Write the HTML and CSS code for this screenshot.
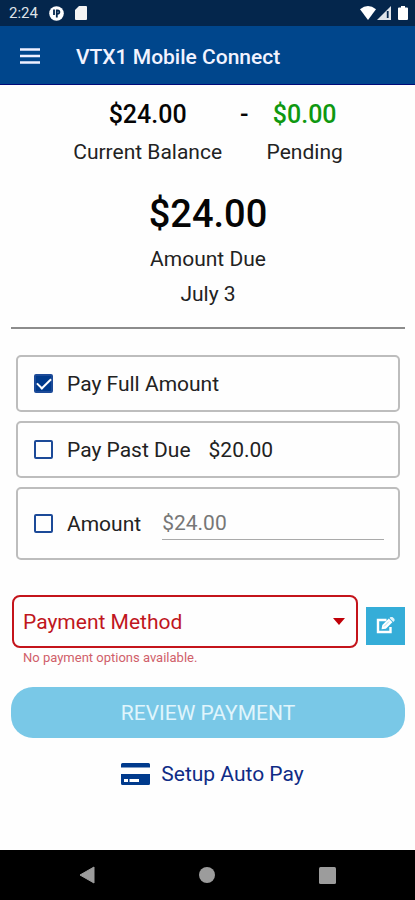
FILE: index.html
```html
<!DOCTYPE html>
<html lang="en">
<head>
<meta charset="utf-8">
<meta name="viewport" content="width=device-width, initial-scale=1">
<title>VTX1 Mobile Connect</title>
<link rel="stylesheet" href="styles.css">
</head>
<body>
<div class="status">
  <span class="status-time">2:24</span>
  <svg class="status-app" width="15" height="15" viewBox="0 0 15 15" aria-hidden="true"><circle cx="7.5" cy="7.5" r="7.3" fill="#fff"/><path d="M5 3.500v5.500M7.800 11.500V4.300h.8a1.800 1.800 0 0 1 0 3.600h-.8" fill="none" stroke="#04264c" stroke-width="1.800"/></svg>
  <svg width="12" height="14" viewBox="0 0 12 14" aria-hidden="true"><path d="M4 0h7q1 0 1 1v12q0 1-1 1H1q-1 0-1-1V4z" fill="#f4f4f4"/></svg>
  <div class="status-right">
    <svg width="16" height="14" viewBox="0 0 16 14" aria-hidden="true"><path d="M0 3.2Q8-3 16 3.2L8 14z" fill="#fff"/></svg>
    <svg width="14" height="14" viewBox="0 0 14 14" aria-hidden="true"><path d="M0 14L14 0v14z" fill="#dfe4ea"/><path d="M10.7 5v7" stroke="#04264c" stroke-width="1.8"/></svg>
    <svg class="battery" width="10" height="14" viewBox="0 0 10 14" aria-hidden="true"><path d="M3 0h4v1.5h2q1 0 1 1V13q0 1-1 1H1q-1 0-1-1V2.500q0-1 1-1h2z" fill="#fff"/></svg>
  </div>
</div>
<header class="bar">
  <button class="menu" type="button" aria-label="Menu"><svg width="22" height="16" viewBox="0 0 22 16"><path d="M1 1.500h20M1 8h20M1 14.500h20" stroke="#eef0ff" stroke-width="2.300"/></svg></button>
  <h1>VTX1 Mobile Connect</h1>
</header>
<main>
  <section class="balances">
    <div class="balance"><strong>$24.00</strong><span>Current Balance</span></div>
    <strong class="dash">-</strong>
    <div class="balance pending"><strong>$0.00</strong><span>Pending</span></div>
  </section>
  <section class="due">
    <strong>$24.00</strong>
    <span>Amount Due</span>
    <span>July 3</span>
  </section>
  <form class="form">
    <div class="options">
      <label class="option"><input class="check" type="checkbox" checked><span>Pay Full Amount</span></label>
      <label class="option"><input class="check" type="checkbox"><span>Pay Past Due</span><span>$20.00</span></label>
      <div class="option tall"><input class="check" type="checkbox" id="other"><label for="other">Amount</label><input class="amount" type="text" placeholder="$24.00" aria-label="Other amount"></div>
    </div>
    <div class="method">
      <div class="field">
        <select class="select" aria-label="Payment method"><option>Payment Method</option></select>
        <svg class="caret" width="12" height="7" viewBox="0 0 12 7" aria-hidden="true"><path d="M0 0h12L6 7z" fill="#c00008"/></svg>
      </div>
      <button class="edit" type="button" aria-label="Edit payment methods"><svg width="19" height="17" viewBox="0 0 19 17"><path d="M10.500 3H2v12h12.500v-5" fill="none" stroke="#fff" stroke-width="2.400"/><path d="M5.500 12.300l.8-4.200 6.500-6.500 3.600 3.600-6.500 6.500z" fill="#fff"/><path d="M13.500 1l1-1h2L18.500 2v1.800l-1.200 1.200z" fill="#dff3fa"/><path d="M8 9.500l5-5" stroke="#8fd0e8" stroke-width=".8"/></svg></button>
    </div>
    <p class="error">No payment options available.</p>
    <button class="review" type="button">REVIEW PAYMENT</button>
    <a class="auto" href="#"><svg width="29" height="22" viewBox="0 0 29 22" aria-hidden="true"><path d="M1.500 0h26Q29 0 29 1.500V4.500H0v-3Q0 0 1.500 0zM0 11h29v9.500q0 1.500-1.500 1.500h-26Q0 22 0 20.500z" fill="#003a8c"/><path d="M3 16h4v3H3zM8.500 16H18v3H8.500z" fill="#fff"/></svg><span>Setup Auto Pay</span></a>
  </form>
</main>
<nav class="nav">
  <button type="button" aria-label="Back"><svg width="16" height="18" viewBox="0 0 16 18"><path d="M15 1v16L1 9z" fill="#9c9c9c" stroke="#9c9c9c" stroke-linejoin="round"/></svg></button>
  <button type="button" aria-label="Home"><svg width="16" height="16" viewBox="0 0 16 16"><circle cx="8" cy="8" r="8" fill="#9c9c9c"/></svg></button>
  <button type="button" aria-label="Recent apps"><svg width="17" height="17" viewBox="0 0 17 17"><rect width="17" height="17" rx="1.500" fill="#9c9c9c"/></svg></button>
</nav>
</body>
</html>
```
FILE: styles.css
```css
* { box-sizing: border-box; }
body {
  margin: 0;
  min-height: 100vh;
  display: flex;
  flex-direction: column;
  background: #fefefe;
  color: #222;
  font: 400 21px/24px Roboto, "Liberation Sans", sans-serif;
}
button, input, select { font: inherit; color: inherit; margin: 0; padding: 0; border: 0; background: none; }
button svg { display: block; }
strong { font-weight: 500; color: #050505; }

.status { display: flex; align-items: center; height: 26px; padding: 0 7px 0 9px; background: #04264c; }
.status-time { color: #dfe3e8; font-size: 15px; }
.status-app { margin: 0 11px; }
.status-right { display: flex; margin-left: auto; gap: 1px; }
.battery { margin-left: 6px; }

.bar { display: flex; align-items: center; height: 59px; padding: 2px 19px 0; background: #00468c; border-bottom: 1px solid #000a78; }
.bar h1 { margin: 2px 0 0 35px; font-size: 21px; font-weight: 500; color: #f2f3ff; }

main { flex: 1; padding: 18px 10px 14px 11px; }
.balances { display: flex; justify-content: center; gap: 18px; }
.balance { display: flex; flex-direction: column; align-items: center; gap: 13px; }
.balance strong, .dash { font-size: 25px; }
.balance.pending strong { color: #0f9810; }
.due { display: flex; flex-direction: column; align-items: center; gap: 11px; padding: 32px 0 21px; border-bottom: 2px solid #8c8c8c; }
.due strong { margin-bottom: 4px; font-size: 38px; line-height: 36px; }

.options { display: flex; flex-direction: column; gap: 9px; padding: 26px 5px 35px; }
.option { display: flex; align-items: center; height: 57px; padding: 0 14px 0 16px; border: 2px solid #bdbdbd; border-radius: 5px; }
.option.tall { height: 73px; }
.option span + span { margin-left: 18px; }
.check { appearance: none; flex: none; width: 19px; height: 19px; margin-right: 14px; border: 2px solid #1c4a98; border-radius: 2px; }
.check:checked { display: grid; place-items: center; background: #003a8c; }
.check:checked::before { content: ""; width: 12px; height: 6px; margin-bottom: 4px; border: solid #fff; border-width: 0 0 2px 2px; transform: rotate(-45deg); }
.amount { flex: 1; min-width: 0; height: 32px; margin-left: 21px; border-bottom: 1px solid #aaa; border-radius: 0; outline: 0; }
.amount::placeholder { color: #777; opacity: 1; }

.method { display: flex; align-items: center; gap: 8px; padding-left: 1px; }
.field { flex: 1; display: grid; align-items: center; }
.select { grid-area: 1 / 1; appearance: none; width: 100%; height: 53px; padding-left: 9px; border: 2px solid #c4141b; border-radius: 8px; color: #c0161d; }
.caret { grid-area: 1 / 1; justify-self: end; margin-right: 13px; pointer-events: none; }
.edit { display: grid; place-items: center; width: 39px; height: 38px; margin-top: 8px; background: #35add8; }
.error { margin: 0; padding: 2px 12px 21px; color: #d0606a; font-size: 13px; line-height: 16px; }
.review { display: block; width: 100%; height: 51px; border-radius: 22px; background: #79c8e7; color: #e0f5fc; }
.auto { display: flex; justify-content: center; align-items: center; gap: 11px; margin-top: 24px; padding-left: 9px; color: #0f2c86; text-decoration: none; }

.nav { display: flex; justify-content: space-between; align-items: center; height: 50px; padding: 0 79px; background: #000; }
```
